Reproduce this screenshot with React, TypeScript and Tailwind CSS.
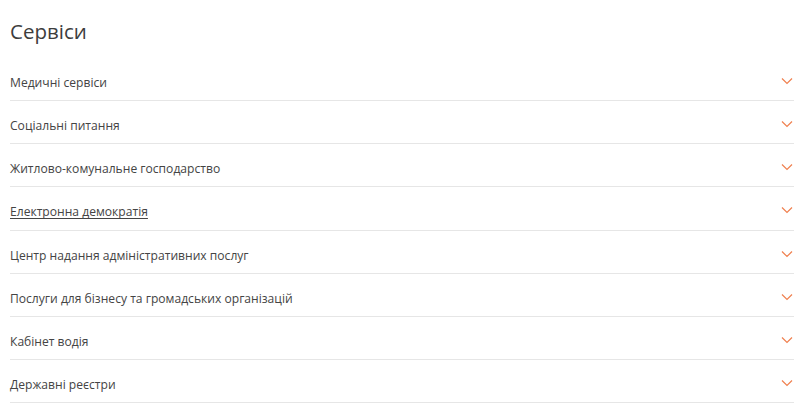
import React from "react";

const items = [
  "Медичні сервіси",
  "Соціальні питання",
  "Житлово-комунальне господарство",
  "Електронна демократія",
  "Центр надання адміністративних послуг",
  "Послуги для бізнесу та громадських організацій",
  "Кабінет водія",
  "Державні реєстри",
];

function Chevron() {
  return (
    <svg width="12" height="8" viewBox="0 0 12 8" fill="none">
      <path d="M1 1.5 L6 6.5 L11 1.5" stroke="#f0804f" strokeWidth="1.2" />
    </svg>
  );
}

export default function App() {
  return (
    <div
      className="w-[800px] h-[404px] bg-white overflow-hidden pl-[10px] pr-[6px]"
      style={{ fontFamily: '"Open Sans", "Noto Sans", sans-serif' }}
    >
      <h1 className="text-[20.5px] leading-[30px] text-[#3d3d3d] font-normal pt-[16px] mb-[12px]">
        Сервіси
      </h1>
      <div className="flex flex-col">
        {items.map((t, i) => (
          <div
            key={t}
            className="flex items-center justify-between border-b border-[#e6e6e6] pt-[16px] pb-[8px] h-[43.15px]"
          >
            <span
              className={
                "text-[12.1px] leading-[18px] text-[#444] " +
                (i === 3 ? "underline underline-offset-2" : "")
              }
            >
              {t}
            </span>
            <span className="pr-[1px] -mt-[4px]">
              <Chevron />
            </span>
          </div>
        ))}
      </div>
    </div>
  );
}
